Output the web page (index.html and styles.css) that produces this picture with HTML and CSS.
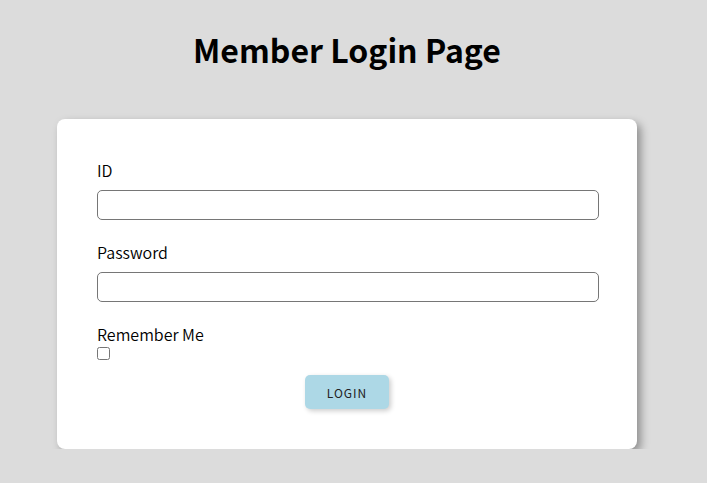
FILE: index.html
```html
<!DOCTYPE html>
<html>
<head>
<meta charset="utf-8">
<link rel="stylesheet" href="styles.css">
</head>
<body>
<div class="page">
  <h1 class="title">Member Login Page</h1>
  <form class="card">
    <div class="field">
      <label class="label" for="id">ID</label>
      <input class="input" id="id" type="text">
    </div>
    <div class="field">
      <label class="label" for="pw">Password</label>
      <input class="input" id="pw" type="password">
    </div>
    <div class="remember">
      <label class="label" for="rm">Remember Me</label>
      <input class="check" id="rm" type="checkbox">
    </div>
    <div class="actions">
      <button class="btn" type="button">LOGIN</button>
    </div>
  </form>
</div>
</body>
</html>
```
FILE: styles.css
```css
html, body {
  margin: 0;
  padding: 0;
  background: #dcdcdc;
}
body {
  font-family: "Noto Sans CJK KR", "Noto Sans", sans-serif;
  color: #000;
}
.page {
  width: 694px;
  padding-top: 29px;
}
.title {
  margin: 0;
  font-size: 32px;
  line-height: 40px;
  font-weight: 700;
  text-align: center;
}
.card {
  margin: 50px auto 0 auto;
  width: 500px;
  padding: 40px 40px 40px 40px;
  background: #fff;
  border-radius: 8px;
  box-shadow: 4px 4px 8px rgba(0,0,0,0.35);
}
.field {
  margin-bottom: 21px;
}
.label {
  display: block;
  font-size: 16px;
  font-weight: 350;
  line-height: 22px;
  margin-bottom: 9px;
}
.input {
  display: block;
  box-sizing: border-box;
  width: 502px;
  height: 30px;
  margin: 0;
  border: 1px solid #767676;
  border-radius: 5px;
  background: #fff;
}
.remember .label {
  margin-bottom: 0;
}
.check {
  display: block;
  width: 13px;
  height: 13px;
  margin: 2px 0 0 0;
}
.actions {
  display: flex;
  justify-content: center;
  margin-top: 15px;
}
.btn {
  width: 84px;
  height: 34px;
  border: none;
  border-radius: 5px;
  background: #add8e6;
  color: #222;
  font-family: "Noto Sans CJK KR", "Noto Sans", sans-serif;
  font-size: 12px;
  letter-spacing: 1px;
  box-shadow: 2px 2px 5px rgba(0,0,0,0.2);
}
```
